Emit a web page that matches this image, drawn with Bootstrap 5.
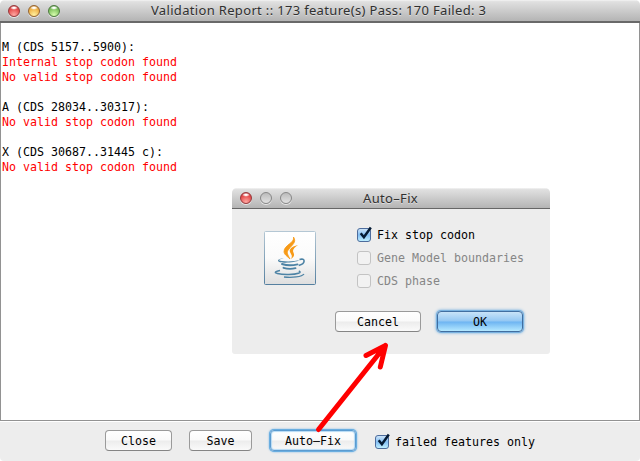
<!DOCTYPE html>
<html lang="en">
<head>
<meta charset="utf-8">
<meta name="viewport" content="width=device-width, initial-scale=1">
<title>Validation Report</title>
<link href="https://cdn.jsdelivr.net/npm/bootstrap@5.3.0/dist/css/bootstrap.min.css" rel="stylesheet">
<style>
body{font-family:"DejaVu Sans Mono",monospace;font-size:11.63px;line-height:15px;color:#000;background:#fff}
.window{width:640px;height:461px;background:#ededed;border-radius:5px 5px 4px 4px}
.titlebar{background:linear-gradient(#f4f4f4 0,#e0e0e0 8%,#b4b4b4 100%);font-family:"Noto Sans","Open Sans",sans-serif;font-size:13px;letter-spacing:.33px;color:#303030;text-shadow:0 1px 0 #ddd;border-radius:5px 5px 0 0}
.main-title{height:23px;border-bottom:2px solid #696969}
.main-caption{padding-left:91px}
.dialog-title{height:21px;border-bottom:1px solid #666}
.dialog-caption{padding-left:71px}
.lights{padding-left:8px;gap:8px}
.light{width:12px;height:12px;border-radius:50%;border:1px solid #777;box-shadow:0 1px 0 #e8e8e8}
.light-red{background:radial-gradient(ellipse 4px 2px at 50% 18%,#fff 30%,transparent),radial-gradient(circle at 50% 90%,#ffaaa4,#e54a4a 65%,#b92e34);border-color:#96393c}
.light-amber{background:radial-gradient(ellipse 4px 2px at 50% 18%,#fff 30%,transparent),radial-gradient(circle at 50% 90%,#fff2a0,#efb045 65%,#c17c28);border-color:#956430}
.light-green{background:radial-gradient(ellipse 4px 2px at 50% 18%,#fff 30%,transparent),radial-gradient(circle at 50% 90%,#d9ffb0,#7dc05c 65%,#4a8b38);border-color:#4d7a40}
.light-off{background:linear-gradient(#bbb,#e2e2e2);border-color:#888}
.report{background:#fff;border:solid #929292;border-width:0 1px 1px;padding:17px 0 0 1px;white-space:pre}
.fail{color:#f00}
.footer-bar{height:40px;border-top:1px solid #fff;padding-left:105px}
.aqua{height:21px;padding:0;font:inherit;line-height:18px;color:#000!important;border:1px solid #9a9a9a;border-bottom-color:#858585;border-radius:4px;background:linear-gradient(#fff 0,#fafafa 48%,#ececec 52%,#fafafa 100%)!important}
.footer-bar .aqua{position:relative;top:-1px}
.aqua-focus{border-color:#5b9bd0!important;box-shadow:0 0 0 1px #6aaee0,0 0 2px 1px #72b4e8,inset 0 0 1px 1px #b5daf4}
.aqua-default{border-color:#416ea0!important;background:linear-gradient(#c8e3f8 0,#93c7f3 48%,#6db4f2 52%,#b4e8ff 100%)!important;box-shadow:0 0 0 1px #79b2e0,0 0 3px 1px #66a8de}
.w-close{width:67px}.w-save{width:63px;margin-left:17px}.w-fix{width:86px;margin-left:18px}
.w-cancel{width:86px}.w-ok{width:86px;margin-left:16px}
.footer-check{margin-left:19px;gap:4px;padding-top:2px}
.tick{width:16px;height:17px;flex:none;overflow:visible;margin-top:-2px}
.dialog-box{left:232px;top:188px;width:318px;height:166px;background:#ededed;border-radius:5px 5px 3px 3px}
.dialog-body{padding:15px 0 0 32px}
.options{margin-left:41px}
.option{height:23px;gap:4px}
.option-off{color:#868686}
.java{width:52px;height:54px;margin-top:7px}
.dialog-actions{padding:18px 0 0 103px}
.arrow{left:0;top:0;pointer-events:none}
</style>
</head>
<body class="overflow-hidden">
<svg class="position-absolute" width="0" height="0" aria-hidden="true">
<defs>
<linearGradient id="blue" x2="0" y2="1"><stop stop-color="#d3e7f9"/><stop offset=".5" stop-color="#83bff4"/><stop offset="1" stop-color="#c3f2ff"/></linearGradient>
<linearGradient id="tile" x2="0" y2="1"><stop stop-color="#fff"/><stop offset=".5" stop-color="#fbfbfb"/><stop offset="1" stop-color="#dedede"/></linearGradient>
<linearGradient id="rim" x2="0" y2="1"><stop stop-color="#b4c7d4"/><stop offset="1" stop-color="#5580a0"/></linearGradient>
</defs>
</svg>
<main class="window position-relative d-flex flex-column">
<header class="titlebar main-title d-flex align-items-center">
<div class="lights d-flex"><i class="light light-red"></i><i class="light light-amber"></i><i class="light light-green"></i></div>
<span class="main-caption text-nowrap">Validation Report :: 173 feature(s) Pass: 170 Failed: 3</span>
</header>
<section class="report flex-grow-1"><div>M (CDS 5157..5900):</div><div class="fail">Internal stop codon found</div><div class="fail">No valid stop codon found</div><br><div>A (CDS 28034..30317):</div><div class="fail">No valid stop codon found</div><br><div>X (CDS 30687..31445 c):</div><div class="fail">No valid stop codon found</div></section>
<footer class="footer-bar d-flex align-items-center">
<button class="btn aqua w-close">Close</button>
<button class="btn aqua w-save">Save</button>
<button class="btn aqua aqua-focus w-fix">Auto–Fix</button>
<div class="footer-check d-flex align-items-center"><svg class="tick" viewBox="0 0 16 17"><rect x=".5" y="2.5" width="13" height="13" rx="2.5" fill="url(#blue)" stroke="#4d6c9c"/><path d="M3.7 7.2 6.9 11.2 13.8 1.5" fill="none" stroke="#051b35" stroke-width="2.5"/></svg><span>failed features only</span></div>
</footer>
<section class="dialog-box position-absolute">
<header class="titlebar dialog-title d-flex align-items-center">
<div class="lights d-flex"><i class="light light-red"></i><i class="light light-off"></i><i class="light light-off"></i></div>
<span class="dialog-caption text-nowrap">Auto–Fix</span>
</header>
<div class="dialog-body d-flex align-items-start">
<svg class="java" viewBox="0 0 52 54">
<rect x=".5" y=".5" width="51" height="53" rx="1" fill="url(#tile)" stroke="url(#rim)"/>
<path d="M29.5 6C31 12 20 14 20 20.500c0 3 3.500 5 6 7.500-2.500-5-4-6.500-1-10 3-4 8-7 4.500-12Z" fill="#f79a17" stroke="#f79a17" stroke-width=".8"/>
<path d="M34 14c-5 1-9.500 4-8 7 .8 2 3 3.500 1 7 5-3.500 2.500-5.500 2-8 0-2 2-4 5-6Z" fill="#f79a17"/>
<path d="M20 27.500c-5 .5-7 2-2 2.600 6 .7 13 .3 18-1-6 3.300-22 3.500-22 .7 0-1.800 3-2.300 6-2.300Z" fill="#4d83a5"/>
<path d="M35.500 28.500c6-2 6.500 4-.8 6" fill="none" stroke="#4d83a5" stroke-width="1.600"/>
<path d="M18 33q7 2.300 15.500.4M19.500 36.800q6 2 12 .4" fill="none" stroke="#4d83a5" stroke-width="1.900" stroke-linecap="round"/>
<path d="M16 39.500c-12 2.500 2 4.200 9 4 8-.1 14-2 9.800-3.500" fill="none" stroke="#4d83a5" stroke-width="1.400"/>
<path d="M20 46c8 .8 18 0 20-3" fill="none" stroke="#4d83a5" stroke-width="1.300"/>
</svg>
<div class="options">
<div class="option d-flex align-items-center"><svg class="tick" viewBox="0 0 16 17"><rect x=".5" y="2.500" width="13" height="13" rx="2.500" fill="url(#blue)" stroke="#4d6c9c"/><path d="M3.700 7.200 6.900 11.200 13.800 1.500" fill="none" stroke="#051b35" stroke-width="2.500"/></svg><span>Fix stop codon</span></div>
<div class="option option-off d-flex align-items-center"><svg class="tick" viewBox="0 0 16 17"><rect x=".5" y="2.500" width="13" height="13" rx="2.500" fill="#f2f2f2" stroke="#c3c3c3"/></svg><span>Gene Model boundaries</span></div>
<div class="option option-off d-flex align-items-center"><svg class="tick" viewBox="0 0 16 17"><rect x=".5" y="2.500" width="13" height="13" rx="2.500" fill="#f2f2f2" stroke="#c3c3c3"/></svg><span>CDS phase</span></div>
</div>
</div>
<div class="dialog-actions d-flex"><button class="btn aqua w-cancel">Cancel</button><button class="btn aqua aqua-default w-ok">OK</button></div>
</section>
<svg class="arrow position-absolute" width="640" height="461" viewBox="0 0 640 461"><path d="M318.500 429.500 385.500 345.500M366 355.500 385.500 345.500 380.300 367" fill="none" stroke="#f00" stroke-width="5" stroke-linecap="round" stroke-linejoin="round"/></svg>
</main>
<script src="https://cdn.jsdelivr.net/npm/bootstrap@5.3.0/dist/js/bootstrap.bundle.min.js"></script>
</body>
</html>
